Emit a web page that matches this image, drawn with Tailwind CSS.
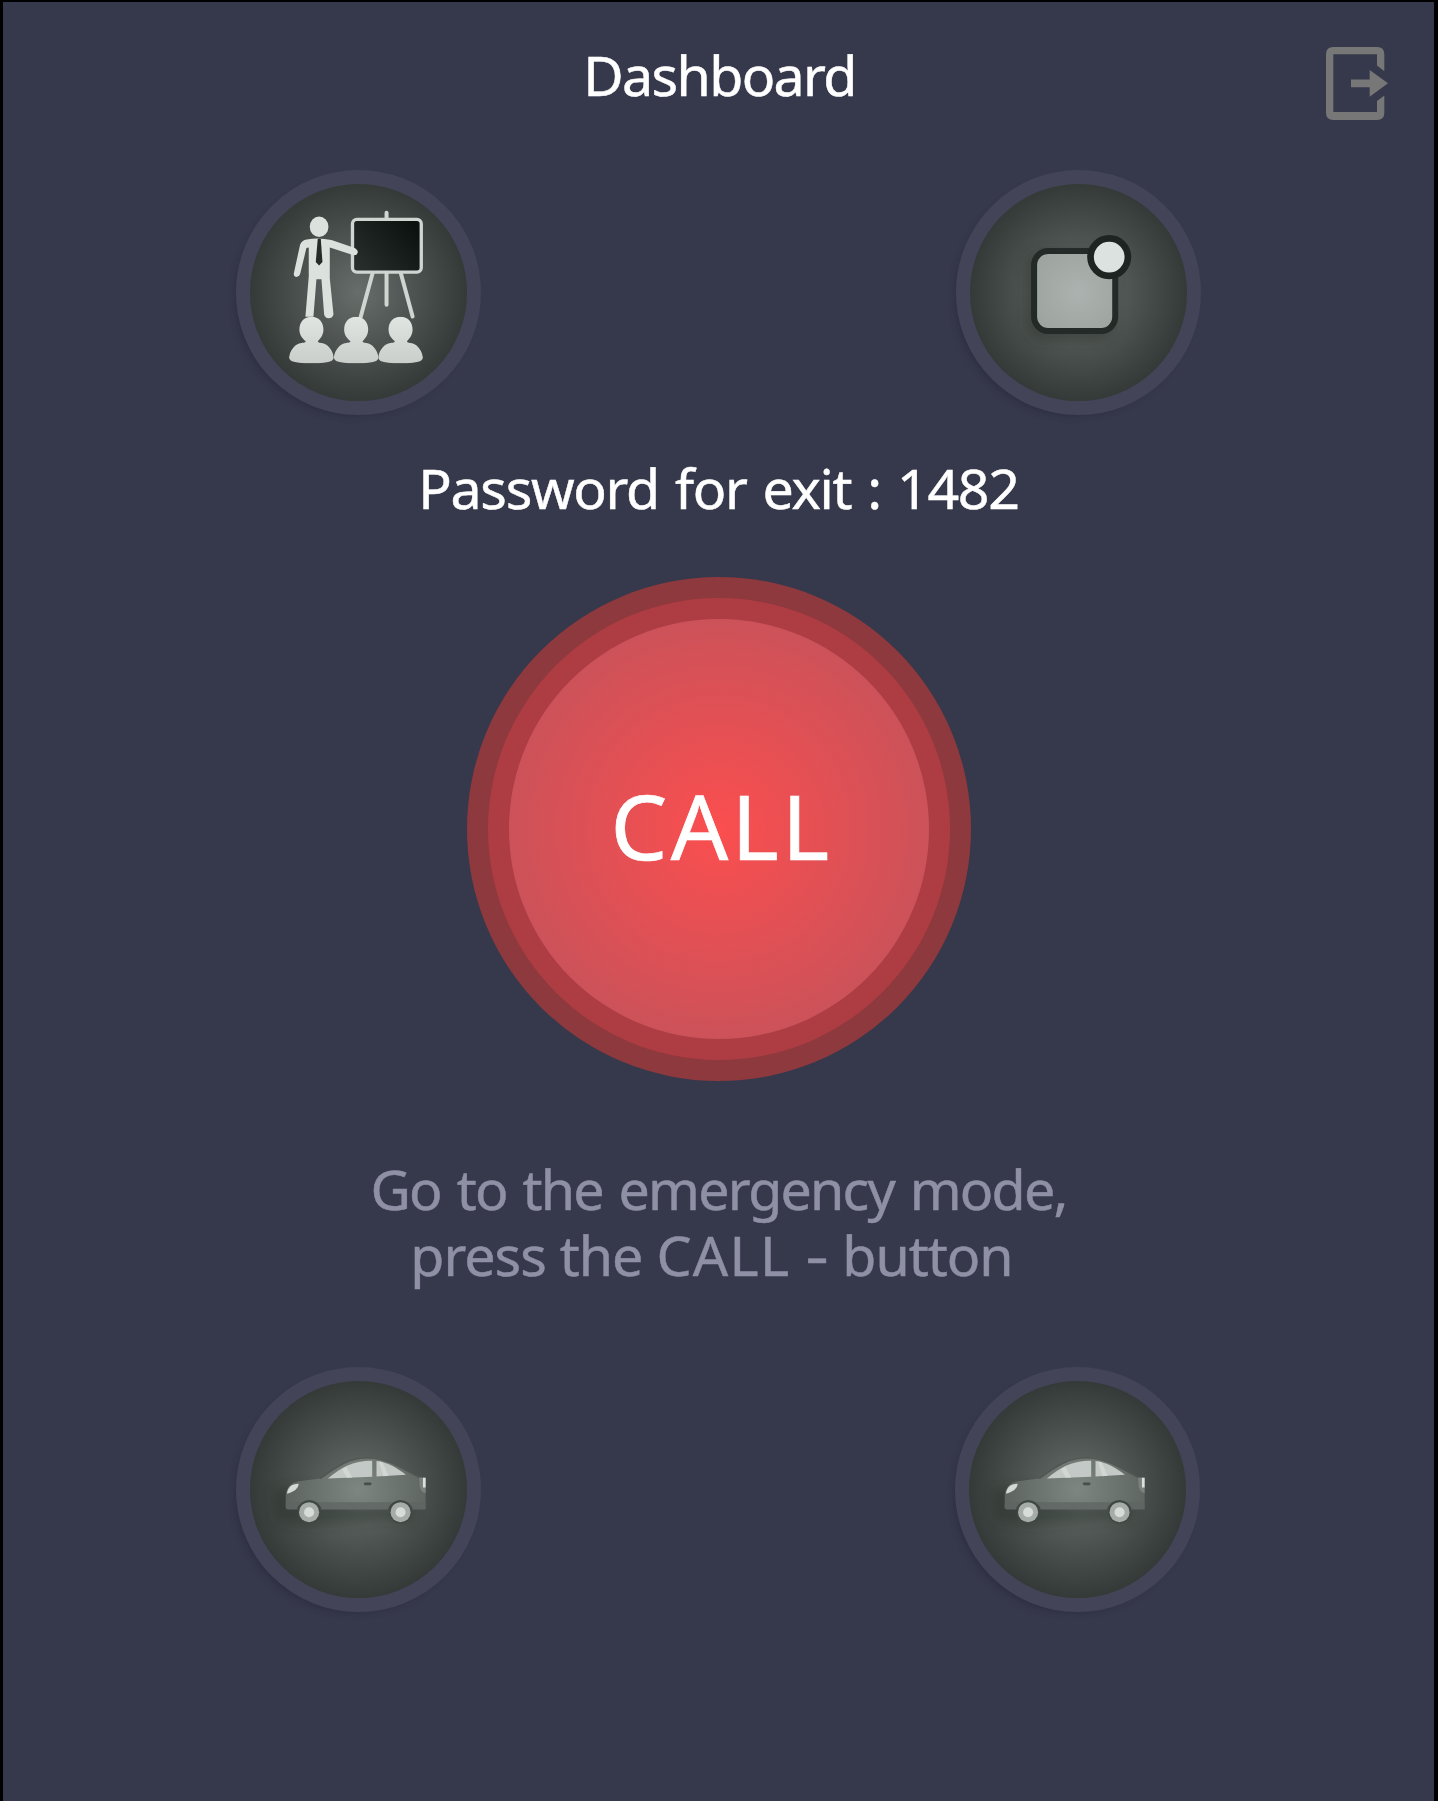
<!DOCTYPE html>
<html lang="en">
<head>
<meta charset="utf-8">
<title>Dashboard</title>
<script src="https://cdn.jsdelivr.net/npm/@tailwindcss/browser@4"></script>
</head>
<body class="h-[1801px] w-[1440px] overflow-hidden bg-white font-['Noto_Sans',sans-serif]">
<svg class="absolute size-0" aria-hidden="true">
  <defs>
    <radialGradient id="shine" gradientUnits="userSpaceOnUse" cx="414" cy="418" r="330">
      <stop offset="0" stop-color="#7e8682"/><stop offset="1" stop-color="#4c534f"/>
    </radialGradient>
    <radialGradient id="tile" gradientUnits="userSpaceOnUse" cx="414" cy="412" r="200">
      <stop offset="0" stop-color="#acb2af"/><stop offset="1" stop-color="#98a09b"/>
    </radialGradient>
    <linearGradient id="board" x1="0" y1="1" x2="1" y2="0.3">
      <stop offset="0" stop-color="#2b312e"/><stop offset="1" stop-color="#0c1210"/>
    </linearGradient>
    <linearGradient id="bust" x1="0" y1="0" x2="0" y2="1">
      <stop offset="0" stop-color="#e0e5e2"/><stop offset="1" stop-color="#c9cecb"/>
    </linearGradient>
    <filter id="soft" x="-50%" y="-50%" width="200%" height="200%"><feGaussianBlur stdDeviation="18"/></filter>
    <symbol id="car" viewBox="90 94 650 650">
      <path d="M160 420L270 410L400 470L590 470L570 515L500 505L260 525L170 510Z" fill="#222925" opacity=".4" filter="url(#soft)"/>
      <path d="M197 472V434Q202 400 236 394L300 386C350 352 385 322 442 322C505 322 552 360 597 382H616V478H206Q197 478 197 472Z" fill="url(#shine)"/>
      <path d="M197 457H616V479H206Q197 479 197 472Z" fill="#5d6461" opacity=".75"/>
      <path d="M300 386C350 350 385 324 442 324C505 324 552 360 597 382" fill="none" stroke="#505753" stroke-width="5"/>
      <path d="M230 479A39 39 0 0 1 305 479ZM503 479A39 39 0 0 1 578 479Z" fill="#434a46"/>
      <path d="M323 386C365 353 395 333 456 333V381Z" fill="#c3c9c6"/>
      <path d="M469 334C502 337 531 356 557 375L469 380Z" fill="#c3c9c6"/>
      <path d="M366 358L378 350L396 383L380 384ZM476 335L488 338L505 378L490 379Z" fill="#d2d7d4"/>
      <path d="M201 432C202 414 213 402 236 402C234 417 222 426 201 432Z" fill="#d3d9d5"/>
      <path d="M597 384H616V430Q600 426 598 408Z" fill="#7b827e"/>
      <path d="M608 384H616V413H608Z" fill="#dce1de"/>
      <rect x="431" y="398" width="23" height="8" rx="4" fill="#484f4b"/>
      <g id="wheel"><circle cx="267" cy="487" r="34" fill="#414844"/><circle cx="267" cy="487" r="30" fill="#a6ada9"/><circle cx="267" cy="487" r="15" fill="#d7dcd9"/></g>
      <use href="#wheel" x="274"/>
    </symbol>
    <symbol id="person" viewBox="0 0 134 140">
      <path d="M67 0C89 0 103 16 103 38C103 55 94 65 86 73C87 78 94 77 104 80C122 87 131 104 134 122Q134 127 127 132Q110 139 67 139Q24 139 7 132Q0 127 0 122C3 104 12 87 30 80C40 77 49 78 50 73C40 65 31 55 31 38C31 16 45 0 67 0Z" fill="url(#bust)"/>
    </symbol>
  </defs>
</svg>
<div class="flex h-full w-[1438px] flex-col border-t-2 border-r-4 border-l-3 border-black bg-[#36384b]">
  <header class="grid h-[168px] grid-cols-[1fr_auto_1fr] items-start">
    <h1 class="col-start-2 mt-[35px] pl-[2px] text-[55.5px] leading-[75px] tracking-[-1.65px] whitespace-nowrap text-white [-webkit-text-stroke:0.5px_currentColor]">Dashboard</h1>
    <button class="mt-[45px] mr-[46px] justify-self-end" aria-label="Exit">
      <svg class="h-[73px] w-[62px]" viewBox="78 141 186 220" fill="#777" preserveAspectRatio="none">
        <path d="M100 141H231Q253 141 253 163V214L231 197V163H100V337H231V304L253 287V339Q253 361 231 361H100Q78 361 78 339V163Q78 141 100 141Z"/>
        <path d="M153 239H209V210L264 250L209 291V262H153Z"/>
      </svg>
    </button>
  </header>
  <main class="flex flex-col items-center">
    <div class="flex w-full justify-between pr-[233px] pl-[233px]">
      <button class="size-[245px] rounded-full border-14 border-[#434457] bg-[radial-gradient(circle_closest-side,#666d6a,#343a37)] bg-origin-padding shadow-[-5px_5px_6px_-4px_#25263a80]" aria-label="Training">
        <svg class="size-full" viewBox="90 88 650 650">
          <g fill="none" stroke="#cfd5d1" stroke-linecap="round">
            <path d="M499 174V192M499 356V450" stroke-width="12"/>
            <path d="M457 356L421 488M542 356L577 485" stroke-width="12"/>
            <rect x="397" y="194" width="206" height="158" rx="13" stroke-width="10" fill="url(#board)"/>
          </g>
          <g fill="#dbe1dd">
            <ellipse cx="297" cy="216" rx="28" ry="31"/>
            <path d="M260 254Q297 248 334 256L404 280Q414 286 413 293Q410 304 396 300L329 278V370L340 478Q338 490 325 490Q314 489 312 478L304 373H289L280 486H256L266 365V278L259 280L240 358Q236 368 226 366Q219 362 222 352L240 270Q245 256 260 254Z"/>
          </g>
          <path d="M293 252H302L307 322L297 332L287 322Z" fill="#252b28"/>
          <use href="#person" x="207" y="486" width="134" height="140"/>
          <use href="#person" x="341" y="486" width="134" height="140"/>
          <use href="#person" x="474" y="486" width="134" height="140"/>
        </svg>
      </button>
      <button class="size-[245px] rounded-full border-14 border-[#434457] bg-[radial-gradient(circle_closest-side,#666d6a,#343a37)] bg-origin-padding shadow-[-5px_5px_6px_-4px_#25263a80]" aria-label="Notifications">
        <svg class="size-full" viewBox="90 88 650 650">
          <rect x="260" y="290" width="260" height="265" rx="50" fill="#252b28" opacity=".4" filter="url(#soft)"/>
          <rect x="282" y="289" width="243" height="239" rx="42" fill="url(#tile)" stroke="#232a27" stroke-width="18"/>
          <circle cx="507" cy="307" r="56" fill="#dce2df" stroke="#1d2421" stroke-width="20"/>
        </svg>
      </button>
    </div>
    <p class="mt-[35px] text-[55.5px] leading-[75px] tracking-[-1.3px] [word-spacing:2.9px] whitespace-nowrap text-white [-webkit-text-stroke:0.5px_currentColor]">Password for exit : 1482</p>
    <button class="mt-[52px] rounded-full bg-[#8d393e] p-[21px]">
      <span class="block rounded-full bg-[#ae3d43] p-[21px]">
        <span class="flex size-[420px] items-center justify-center rounded-full bg-[radial-gradient(circle_closest-side,#fb4e4f,#cc5259)] pb-[9px] pl-[6px] text-[90px] leading-none tracking-[3.3px] text-white [-webkit-text-stroke:0.7px_currentColor]">CALL</span>
      </span>
    </button>
    <p class="mt-[75px] text-center text-[55.5px] leading-[66px] whitespace-pre text-[#8f90a5] [-webkit-text-stroke:0.5px_currentColor]"><span class="block tracking-[-1.8px] [word-spacing:3.2px]">Go to the emergency mode,</span><span class="block tracking-[-1px] [word-spacing:0.6px]">press the <span class="inline-block tracking-[1.3px]">CALL</span> <span class="mx-[3.5px] inline-block scale-x-130">-</span> button </span></p>
    <div class="mt-[79px] flex w-full justify-between pr-[234px] pl-[233px]">
      <button class="size-[245px] rounded-full border-14 border-[#434457] bg-[radial-gradient(circle_closest-side,#666d6a,#343a37)] bg-origin-padding shadow-[-5px_5px_6px_-4px_#25263a80]" aria-label="Car one">
        <svg class="size-full"><use href="#car"/></svg>
      </button>
      <button class="size-[245px] rounded-full border-14 border-[#434457] bg-[radial-gradient(circle_closest-side,#666d6a,#343a37)] bg-origin-padding shadow-[-5px_5px_6px_-4px_#25263a80]" aria-label="Car two">
        <svg class="size-full"><use href="#car"/></svg>
      </button>
    </div>
  </main>
</div>
</body>
</html>
